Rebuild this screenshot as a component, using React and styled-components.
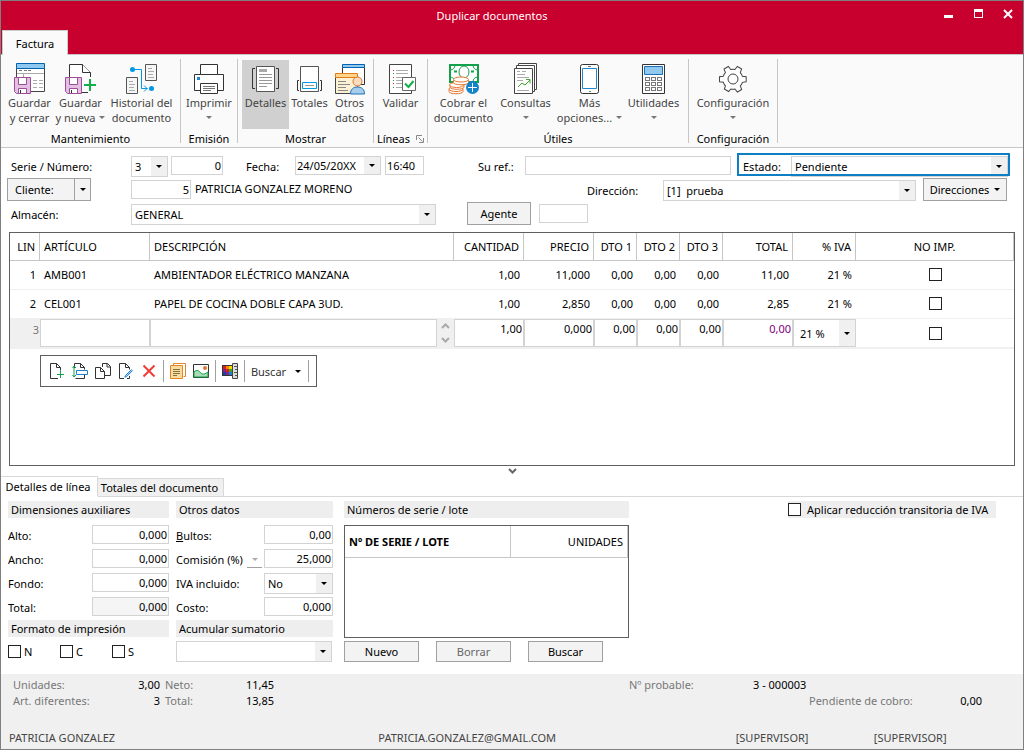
import React from 'react';
import styled, { createGlobalStyle, css } from 'styled-components';

const GlobalStyle = createGlobalStyle`
  * {
    box-sizing: border-box;
  }

  body {
    margin: 0;
    background: #fff;
  }

  body,
  button,
  input,
  select {
    font-family: 'Noto Sans', 'Open Sans', sans-serif;
    font-size: 11px;
    color: #000;
  }
`;

/* ---------- window ---------- */

const Window = styled.div`
  display: flex;
  flex-direction: column;
  min-height: 100vh;
  border: 1px solid #7f7f7f;
  background: #fff;
`;

const TitleBar = styled.header`
  display: flex;
  align-items: center;
  height: 29px;
  padding-left: 50px;
  background: #c8002d;
`;

const Title = styled.h1`
  flex: 1;
  margin: 0;
  font-size: 11px;
  font-weight: 400;
  text-align: center;
  color: #fff;
`;

const WindowButton = styled.button`
  display: flex;
  align-items: center;
  justify-content: center;
  width: 30px;
  height: 24px;
  margin-bottom: 4px;
  padding: 0;
  border: 0;
  background: transparent;
`;

const RibbonTabs = styled.nav`
  display: flex;
  height: 24px;
  padding-left: 1px;
  background: #c8002d;
`;

const RibbonTab = styled.button`
  position: relative;
  width: 66px;
  height: 25px;
  padding: 0;
  border: 1px solid #ccc;
  border-bottom: 0;
  background: #fafafa;
`;

/* ---------- ribbon ---------- */

const Ribbon = styled.div`
  display: flex;
  padding: 4px 0;
  border-top: 1px solid #c6c6c6;
  border-bottom: 1px solid #c6c6c6;
  background: #fafafa;
`;

const RibbonGroup = styled.section`
  display: flex;
  flex-direction: column;
  height: 84px;
  padding: 1px ${({ $pad = 0 }) => $pad}px 0;
  border-right: 1px solid #c6c6c6;
`;

const RibbonItems = styled.div`
  display: flex;
`;

const RibbonLabel = styled.div`
  display: flex;
  align-items: center;
  justify-content: center;
  gap: 6px;
  margin-top: 2px;
  line-height: 16px;
`;

const RibbonButton = styled.button`
  display: flex;
  flex-direction: column;
  align-items: center;
  width: ${({ $width }) => $width}px;
  height: 69px;
  padding: 3px 0 0;
  border: 0;
  background: ${({ $active }) => ($active ? '#d0d0d0' : 'transparent')};
  color: #444;
  line-height: 15px;
  white-space: nowrap;

  svg {
    flex: none;
  }
`;

const ButtonLine = styled.span`
  display: flex;
  align-items: center;
  justify-content: center;
  gap: 4px;
  height: 15px;
`;

const Caret = styled.i`
  flex: none;
  width: 0;
  height: 0;
  border: 3px solid transparent;
  border-top-color: ${({ $color = '#000' }) => $color};
  border-bottom: 0;
`;

/* ---------- fields ---------- */

const Label = styled.label`
  flex: none;
  width: ${({ $width }) => ($width ? `${$width}px` : 'auto')};
  padding-left: ${({ $pad = 0 }) => $pad}px;
  line-height: 22px;
  white-space: nowrap;
`;

const fieldBox = css`
  flex: ${({ $grow }) => ($grow ? '1 1 0' : 'none')};
  width: ${({ $width }) => ($width ? `${$width}px` : 'auto')};
  min-width: 0;
  margin-left: ${({ $gap = 0 }) => $gap}px;
  border: 1px solid #d3d3d3;
`;

const TextInput = styled.input`
  ${fieldBox}
  height: 19px;
  padding: 0 1px 1px;
  border-radius: 0;
  background: ${({ readOnly }) => (readOnly ? '#f5f5f5' : '#fff')};
  text-align: ${({ $right }) => ($right ? 'right' : 'left')};
`;

const ComboBox = styled.span`
  ${fieldBox}
  display: grid;
  grid-template-columns: 1fr 16px;
  height: ${({ $height = 21 }) => $height}px;
  background: #fff;

  select,
  input {
    grid-area: 1 / 1 / 2 / 3;
    width: 100%;
    min-width: 0;
    height: 100%;
    padding: 0 16px 0 ${({ $inset = 3 }) => $inset}px;
    border: 0;
    border-radius: 0;
    background: transparent;
    appearance: none;
  }
`;

const ComboArrow = styled.span`
  display: flex;
  grid-area: 1 / 2;
  align-items: center;
  justify-content: center;
  background: #f0f0f0;
  pointer-events: none;
`;

const Button = styled.button`
  display: flex;
  flex: none;
  align-items: center;
  justify-content: center;
  gap: 5px;
  width: ${({ $width }) => $width}px;
  height: ${({ $height = 23 }) => $height}px;
  padding: 0;
  border: 1px solid #a0a0a0;
  background: #f3f3f3;

  &:disabled {
    color: #666;
  }
`;

const CheckBox = styled.input.attrs({ type: 'checkbox' })`
  width: 13px;
  height: 13px;
  margin: 0;
  border: 1px solid #222;
  background: #fff;
  appearance: none;

  &:checked {
    background: #444;
  }
`;

/* ---------- document header ---------- */

const Form = styled.form`
  padding: 8px 13px 4px 6px;
`;

const FormRow = styled.div`
  display: flex;
  align-items: flex-start;
  height: 24px;

  ${Button} {
    margin-top: -2px;
  }
`;

const ClientCell = styled.div`
  display: flex;
  flex: none;
  width: 124px;
`;

const SplitMain = styled(Button)`
  justify-content: flex-start;
  padding-left: 7px;
  border-right: 0;
`;

const ClientName = styled.output`
  flex: none;
  width: 392px;
  margin-left: 4px;
  line-height: 18px;
`;

const AgentCell = styled.div`
  display: flex;
  gap: 8px;
  margin-left: 31px;
`;

const ButtonCell = styled.div`
  margin: 0 3px 0 7px;
`;

const StatusBox = styled.div`
  position: relative;
  display: flex;
  flex: none;
  width: 273px;
  height: 23px;
  margin: -3px 0 0 6px;
  padding: 3px 2px 0 6px;

  &::after {
    content: '';
    position: absolute;
    inset: 0;
    border: 2px solid #0f7fc5;
    pointer-events: none;
  }
`;

/* ---------- lines table ---------- */

const LinesPanel = styled.div`
  flex: 1;
  min-height: 234px;
  margin: 0 8px;
  border: 1px solid #5f5f5f;
`;

const LinesTable = styled.table`
  width: 100%;
  border-collapse: separate;
  border-spacing: 0;
  table-layout: fixed;

  th {
    height: 28px;
    padding: 0 4px 1px;
    border-right: 1px solid #c6c6c6;
    border-bottom: 1px solid #c6c6c6;
    font-weight: 400;
    white-space: nowrap;
  }

  td {
    height: 29px;
    padding: 0 4px 1px;
    border-bottom: 1px solid #f0f0f0;
    white-space: nowrap;
  }

  th,
  td {
    text-align: left;
  }
`;

const NumHead = styled.th`
  && {
    text-align: right;
  }
`;

const NumCell = styled.td`
  && {
    text-align: right;
  }
`;

const CheckHead = styled.th`
  && {
    text-align: center;
  }
`;

const CheckCell = styled.td`
  && {
    text-align: center;
  }

  ${CheckBox} {
    display: block;
    margin: 0 auto;
  }
`;

const EditRow = styled.tr`
  && td {
    height: 30px;
    padding: 0;
    border-bottom: 2px solid #f0f0f0;
  }
`;

const RowNumber = styled.td`
  background: #f0f0f0;
  color: #777;

  ${EditRow} && {
    padding: 0 1px 8px;
    text-align: right;
  }
`;

const CellInput = styled.input`
  display: block;
  width: 100%;
  min-width: 0;
  height: 28px;
  padding: 0 1px 9px;
  border: 1px solid #d3d3d3;
  border-radius: 0;
  color: ${({ $color = '#000' }) => $color};
  text-align: ${({ $right }) => ($right ? 'right' : 'left')};
`;

const DescriptionEdit = styled.div`
  display: flex;
  background: #f0f0f0;
`;

const Stepper = styled.div`
  display: flex;
  flex: none;
  flex-direction: column;
  align-items: center;
  justify-content: space-around;
  width: 17px;
`;

const StepButton = styled.button`
  display: flex;
  padding: 0;
  border: 0;
  background: transparent;
`;

const LinesToolbar = styled.div`
  display: inline-flex;
  align-items: center;
  height: 32px;
  margin: 6px 0 0 30px;
  padding: 0 5px 0 4px;
  border: 1px solid #5f5f5f;
  background: #fff;
`;

const ToolButton = styled.button`
  display: flex;
  align-items: center;
  justify-content: center;
  gap: 9px;
  width: ${({ $width = 23 }) => $width}px;
  height: 24px;
  padding: 0;
  border: 0;
  background: transparent;
  color: #333;
`;

const ToolDivider = styled.span`
  width: 1px;
  height: 22px;
  margin: 0 2px 0 3px;
  background: #a0a0a0;
`;

const Splitter = styled.button`
  display: flex;
  align-items: center;
  justify-content: center;
  height: 10px;
  padding: 0;
  border: 0;
  background: transparent;
`;

/* ---------- details ---------- */

const DetailTabs = styled.div`
  display: flex;
  align-items: flex-end;
  height: 21px;
  box-shadow: inset 0 -1px 0 #d8d8d8;
`;

const DetailTab = styled.button`
  width: ${({ $width }) => $width}px;
  height: ${({ $active }) => ($active ? 21 : 19)}px;
  padding: 0 2px 1px 0;
  border: 1px solid #d8d8d8;
  border-left: 0;
  border-bottom-color: ${({ $active }) => ($active ? '#fff' : '#d8d8d8')};
  background: ${({ $active }) => ($active ? '#fff' : '#f0f0f0')};
  white-space: nowrap;
`;

const Details = styled.div`
  display: flex;
  align-items: flex-start;
  padding: 4px 27px 12px 7px;
`;

const Column = styled.section`
  flex: none;
  width: ${({ $width }) => $width}px;
  margin-right: ${({ $gap }) => $gap}px;
`;

const SectionTitle = styled.h2`
  height: 17px;
  margin: 0;
  padding-left: 3px;
  background: #eee;
  font-size: 11px;
  font-weight: 400;
  line-height: 17px;
`;

const Fields = styled.div`
  display: grid;
  gap: 5px;
  margin: 7px 0 4px;
`;

const FieldRow = styled.div`
  display: flex;
  align-items: flex-start;
  justify-content: space-between;
  height: 19px;
`;

const CommissionMenu = styled.button`
  display: flex;
  align-items: center;
  justify-content: center;
  width: 15px;
  height: 19px;
  margin: 0 2px 0 auto;
  padding: 2px 0 0;
  border: 0;
  border-bottom: 1px solid #a0a0a0;
  background: transparent;
`;

const Formats = styled.div`
  display: flex;
  margin-top: 7px;
`;

const CheckLabel = styled.label`
  display: flex;
  align-items: center;
  gap: ${({ $gap = 3 }) => $gap}px;
  width: ${({ $width }) => ($width ? `${$width}px` : 'auto')};
  height: 15px;
`;

const SumRow = styled.div`
  display: flex;
  margin-top: 4px;
`;

const SerialBox = styled.div`
  height: 113px;
  margin-top: 7px;
  border: 1px solid #5f5f5f;
`;

const SerialTable = styled.table`
  width: 100%;
  border-spacing: 0;

  th {
    height: 32px;
    padding: 0 4px;
    border-right: 1px solid #c6c6c6;
    border-bottom: 1px solid #c6c6c6;
    text-align: left;
  }

  th + th {
    width: 117px;
    font-weight: 400;
    text-align: right;
  }
`;

const SerialButtons = styled.div`
  display: flex;
  gap: 17px;
  margin-top: 3px;
`;

const VatReduction = styled.div`
  display: flex;
  align-items: center;
  width: 208px;
  height: 17px;
  margin-left: auto;
  background: #eee;
  white-space: nowrap;
`;

/* ---------- footer ---------- */

const Footer = styled.footer`
  height: 75px;
  padding-top: 3px;
  background: #f0f0f0;
  line-height: 16px;
`;

const Summary = styled.div`
  display: flex;
  justify-content: space-between;
  padding: 0 41px 0 12px;
`;

const Totals = styled.dl`
  display: grid;
  grid-template-columns: 100px 47px 55px 59px;
  margin: 0;

  dt {
    color: #777;
  }

  dt:nth-of-type(even) {
    padding-left: 5px;
  }

  dd {
    margin: 0;
    text-align: right;
  }
`;

const Pending = styled.dl`
  width: 353px;
  margin: 0;

  div {
    display: flex;
  }

  div + div {
    justify-content: space-between;
    padding-left: 180px;
  }

  dt {
    color: #777;
  }

  dd {
    margin: 0;
  }

  div:first-child dt {
    width: 124px;
  }
`;

const StatusBar = styled.div`
  display: grid;
  grid-template-columns: 369fr 357fr 138fr 149fr;
  margin-top: 21px;
  padding-left: 8px;
  color: #444;
`;

/* ---------- icons ---------- */

const Icon = ({ size = 32, children }) => (
  <svg width={size} height={size} viewBox={`0 0 ${size} ${size}`} fill="none" aria-hidden="true">
    {children}
  </svg>
);

const Floppy = ({ y = 14 }) => (
  <g transform={`translate(0 ${y})`}>
    <path d="M.5 .5h16v16H2.5l-2-2z" fill="#e3bfe3" stroke="#9b4f96" />
    <path d="M4.5 .5h8v7h-8z" fill="#fff" stroke="#9b4f96" />
    <path d="M4.5 16.5v-5h8v5z" fill="#fff" stroke="#9b4f96" />
    <path d="M6.5 13v3" stroke="#333" />
  </g>
);

const SaveCloseIcon = () => (
  <Icon>
    <path d="M2.5 5.5h28v23h-28z" fill="#fff" stroke="#444" />
    <path d="M2.5 .5h28v5h-28z" fill="#91c8f0" stroke="#0063b1" />
    <path d="M5 7.5h3M10 7.5h3M14 7.5h3" stroke="#777" />
    <path d="M3 10.5h27M9.5 10v4" stroke="#aaa" />
    <path d="M19 17.5h4M25 17.5h4M19 20.5h4M25 20.5h4M19 24.5h4M25 24.5h4" stroke="#aaa" />
    <Floppy />
  </Icon>
);

const SaveNewIcon = () => (
  <Icon>
    <path d="M4.5 29.5V1.5h13l8 8v20z" fill="#fff" stroke="#333" />
    <path d="M17.5 1.5v8h8" fill="#fff" stroke="#333" />
    <path d="M25 14v18M18 22h12" stroke="#fafafa" strokeWidth="4" />
    <Floppy />
    <path d="M25 16v12M19 22h12" stroke="#12b04b" strokeWidth="2" />
  </Icon>
);

const HistoryIcon = () => (
  <Icon>
    <path d="M19.5 1.5h11v16h-11zM.5 14.5h11v16H.5z" fill="#f6f6f6" stroke="#555" />
    <path d="M22 5.5h4M22 8.5h6M22 11.5h5M22 14.5h6M3 18.5h4M3 21.5h6M3 24.5h5M3 27.5h6" stroke="#aaa" />
    <path d="M6 6.5h9.5v19h6M18 22.5l3 3-3 3" stroke="#0099e5" />
    <circle cx="6.5" cy="6.5" r="2.5" fill="#0099e5" />
    <circle cx="25.5" cy="25.5" r="2.5" fill="#0099e5" />
  </Icon>
);

const PrintIcon = () => (
  <Icon>
    <path d="M1.5 11.5h29v16h-29z" fill="#fff" stroke="#333" />
    <path d="M7.5 1.5h17v10h-17zM7.5 20.5h17v10h-17z" fill="#fff" stroke="#333" />
    <path d="M10 23.5h12M10 25.5h12M10 27.5h8" stroke="#777" />
    <path d="M4 14h3v3H4z" fill="#1e88d2" />
  </Icon>
);

const DetailsIcon = () => (
  <Icon>
    <path d="M6.5 3.5h18v25h-18z" fill="#fff" stroke="#555" />
    <path d="M9 6h8v3H9z" fill="#aaa" />
    <path d="M9 11.5h13M9 14.5h13M9 17.5h13M9 20.5h13M9 23.5h8" stroke="#999" />
    <path d="M5 5.5H2.500v20H5M26 5.500h2.500v20H26" stroke="#333" />
  </Icon>
);

const TotalsIcon = () => (
  <Icon>
    <path d="M6.5 3.5h18v25h-18z" fill="#fff" stroke="#555" />
    <path d="M8.5 19.5h14v6h-14z" fill="#fff" stroke="#0099e5" />
    <path d="M11 22.5h9" stroke="#999" />
    <path d="M5 17.5H3.5v10H5M26 17.5h1.500v10H26" stroke="#333" />
  </Icon>
);

const OtherDataIcon = () => (
  <Icon>
    <path d="M8.500 4.500h22v17h-22z" fill="#fff" stroke="#333" />
    <path d="M8.500 1.500h22v3h-22z" fill="#91c8f0" stroke="#0063b1" />
    <path d="M1.500 14.500h22v16h-22z" fill="#fbf0d4" stroke="#444" />
    <path d="M1.500 10.500h22v4h-22z" fill="#ffd58a" stroke="#e07b1a" />
    <path d="M4 18.500h8M4 21.500h12M4 24.500h8M4 27.500h10" stroke="#888" />
    <path d="M16.500 31c0-5 3-7 7-7s7 2 7 7z" fill="#a6cdec" stroke="#1e6fb5" />
    <circle cx="23.500" cy="18.500" r="4.500" fill="#fadcc0" stroke="#d6752a" />
  </Icon>
);

const ValidateIcon = () => (
  <Icon>
    <path d="M4.500 1.500h22v29h-22z" fill="#fff" stroke="#444" />
    <path d="M11 7.500h12M11 10.500h12M11 14.500h12M11 17.500h6M11 20.500h6M11 24.500h6" stroke="#aaa" />
    <path d="M8 7.500h1M8 14.500h1M8 20.500h1" stroke="#d22" />
    <path d="M8 10.500h1M8 17.500h1M8 24.500h1" stroke="#12a04b" />
    <path d="M17.500 14.500h13v13h-13z" fill="#fff" stroke="#666" />
    <path d="M20 20.500l3.500 3.500 5-6" stroke="#12b04b" strokeWidth="2" />
  </Icon>
);

const CashIcon = () => (
  <Icon>
    <path d="M2 2h28v17H2z" fill="#fff" stroke="#12a04b" strokeWidth="2" />
    <path d="M2 7c3 0 5-2 5-5M30 7c-3 0-5-2-5-5M25 19c0-3 2-5 5-5M2 14c2 0 3 1 4 2" stroke="#12a04b" />
    <ellipse cx="16" cy="9" rx="5" ry="6" stroke="#12a04b" />
    <path d="M6 8.500h3M23 8.500h3" stroke="#12a04b" strokeWidth="2" />
    <g fill="#fff" stroke="#e8762d">
      <path d="M1 26.500v2c0 3 14 3 14 0v-2z" />
      <ellipse cx="8" cy="26" rx="7" ry="2.500" />
      <path d="M2 22v2c0 3 14 3 14 0v-2z" />
      <ellipse cx="8.500" cy="22" rx="7" ry="2.500" />
      <path d="M5.500 17.500v2c0 3 15 3 15 0v-2z" />
      <ellipse cx="13" cy="16.500" rx="7.500" ry="2.500" />
    </g>
    <circle cx="24.500" cy="24.500" r="6.500" fill="#1583c9" />
    <path d="M24.500 20v9M20 24.500h9" stroke="#fff" />
  </Icon>
);

const QueriesIcon = () => (
  <Icon>
    <path d="M8.500 .5h18v26h-18z" fill="#fff" stroke="#444" />
    <path d="M6.500 2.500h18v26h-18z" fill="#fff" stroke="#444" />
    <path d="M4.500 5.500h18v25h-18z" fill="#fff" stroke="#444" />
    <path d="M7 8.500h3M12 8.500h4M7 11.500h8M7 14.500h12M7 17.500h6M7 27.500h12" stroke="#aaa" />
    <path d="M8 24l4-4 3 2 5-5M16 16.500h4v4" stroke="#3aa528" />
  </Icon>
);

const PhoneIcon = () => (
  <Icon>
    <rect x="6.500" y="1.500" width="18" height="29" rx="2" fill="#fff" stroke="#333" />
    <path d="M8.500 5.500h14v20h-14z" stroke="#1e88d2" />
    <path d="M14 3.500h3M15 28.500h2" stroke="#777" />
  </Icon>
);

const CalculatorIcon = () => (
  <Icon>
    <path d="M4.500 1.500h22v29h-22z" fill="#fff" stroke="#333" />
    <path d="M6.500 3.500h18v8h-18z" fill="#91c8f0" stroke="#1e6fb5" />
    {[14, 19, 24].map((y) =>
      [7, 13, 19].map((x) => (
        <rect key={`${x}-${y}`} x={x + 0.5} y={y + 0.5} width="4" height="3" stroke="#777" />
      ))
    )}
  </Icon>
);

const GearIcon = () => (
  <Icon>
    <path
      transform="rotate(30 16 16)"
      d="M13.500 3h5l.6 3.800a9.800 9.800 0 0 1 3.600 2.100l3.600-1.400 2.500 4.300-3 2.400a9.800 9.800 0 0 1 0 4.200l3 2.400-2.500 4.300-3.600-1.400a9.800 9.800 0 0 1-3.600 2.100l-.6 3.200h-5l-.6-3.200a9.800 9.800 0 0 1-3.600-2.100l-3.600 1.400-2.500-4.300 3-2.400a9.800 9.800 0 0 1 0-4.200l-3-2.400 2.500-4.300 3.600 1.400a9.800 9.800 0 0 1 3.600-2.100z"
      fill="#fff"
      stroke="#444"
    />
    <circle cx="16" cy="16" r="5" stroke="#444" />
  </Icon>
);

const LauncherIcon = () => (
  <Icon size={8}>
    <path d="M.5 5V.5H6M2.500 2.500l4 4M7.500 3v4.500H3" stroke="#888" />
  </Icon>
);

const NewLineIcon = () => (
  <Icon size={16}>
    <path d="M9 15.500H1.500V.5h6l4 4v3M7.500 .5v4h4" stroke="#333" />
    <path d="M11.500 8v7M8 11.500h7" stroke="#12a04b" />
  </Icon>
);

const InsertLineIcon = () => (
  <Icon size={16}>
    <path d="M2.500 5V.500h6l4 4v2M8.500 .5v4h4M3.500 15.500h9V12" stroke="#333" />
    <path d="M4.500 7.500h11v4h-11z" fill="#fff" stroke="#1e7fd0" />
    <path d="M2 3v11M.5 5L2 3l2 2M.5 12L2 14l2-2" stroke="#12a04b" />
  </Icon>
);

const CopyLineIcon = () => (
  <Icon size={16}>
    <path d="M7.500 4V.500h5l3 3v9H10" stroke="#333" />
    <path d="M.5 4.500h5l4 4v7h-9zM5.500 4.500v4h4M12 .5v3.500h3.500" stroke="#333" />
  </Icon>
);

const EditLineIcon = () => (
  <Icon size={16}>
    <path d="M6 15.500H1.500V.5h6l4 4v2M7.500 .5v4h4M9 15.500h2.500V13" stroke="#333" />
    <path d="M13.500 6.500l-6 6-.7 1.700 1.800-.6 6-6" fill="#a6cdec" stroke="#1e7fd0" />
  </Icon>
);

const DeleteIcon = () => (
  <Icon size={16}>
    <path d="M2.500 2.500l11 11M13.500 2.500l-11 11" stroke="#ee3e38" strokeWidth="2" />
  </Icon>
);

const NotesIcon = () => (
  <Icon size={16}>
    <path d="M3.500 2.500v-2h12v13h-2" fill="#fff" stroke="#e0862d" />
    <path d="M.5 2.500h12v13H.5z" fill="#f8dc9c" stroke="#e0862d" />
    <path d="M3 6.500h7M3 8.500h7M3 10.500h7M3 12.500h4" stroke="#877147" />
  </Icon>
);

const ImageIcon = () => (
  <Icon size={16}>
    <path d="M.5 1.500h15v13H.5z" fill="#fff" stroke="#333" />
    <path d="M1 9c3-3 5-1 7 1s4 1 7-1v5H1z" fill="#a9dcb5" stroke="#12a04b" />
    <circle cx="12" cy="5" r="2" fill="#e8762d" />
  </Icon>
);

const swatches = ['#d8201f', '#f08a00', '#f7d800', '#8e1f8f', '#d8201f', '#3aa528', '#1b3fa8', '#8e1f8f', '#1583c9'];

const PaletteIcon = () => (
  <Icon size={16}>
    <path d="M0 2h12v11H0z" fill="#333" />
    {swatches.map((fill, i) => (
      <rect key={i} x={1 + (i % 3) * 3} y={3 + Math.floor(i / 3) * 3} width="3" height="3" fill={fill} />
    ))}
    <path d="M10.500 .5h5v15h-5z" fill="#ddd" stroke="#444" />
    <path d="M12 3.500h3M13 6.500h2M12 9.500h3M13 12.500h2" stroke="#555" />
  </Icon>
);

const Chevron = ({ up, color = '#aaa' }) => (
  <svg width="9" height="6" viewBox="0 0 9 6" fill="none" aria-hidden="true">
    <path d={up ? 'M1 5l3.500-3.500L8 5' : 'M1 1l3.500 3.500L8 1'} stroke={color} strokeWidth="2" />
  </svg>
);

/* ---------- data ---------- */

const ribbonGroups = [
  {
    name: 'Mantenimiento',
    pad: 3,
    items: [
      { icon: SaveCloseIcon, lines: ['Guardar', 'y cerrar'], width: 51 },
      { icon: SaveNewIcon, lines: ['Guardar', 'y nueva'], menu: true, width: 51 },
      { icon: HistoryIcon, lines: ['Historial del', 'documento'], width: 71 },
    ],
  },
  { name: 'Emisión', items: [{ icon: PrintIcon, lines: ['Imprimir', ''], menu: true, width: 56 }] },
  {
    name: 'Mostrar',
    pad: 4,
    items: [
      { icon: DetailsIcon, lines: ['Detalles'], width: 47, active: true },
      { icon: TotalsIcon, lines: ['Totales'], width: 41 },
      { icon: OtherDataIcon, lines: ['Otros', 'datos'], width: 39 },
    ],
  },
  { name: 'Líneas', launcher: true, items: [{ icon: ValidateIcon, lines: ['Validar'], width: 53 }] },
  {
    name: 'Útiles',
    pad: 4,
    items: [
      { icon: CashIcon, lines: ['Cobrar el', 'documento'], width: 63 },
      { icon: QueriesIcon, lines: ['Consultas', ''], menu: true, width: 61 },
      { icon: PhoneIcon, lines: ['Más', 'opciones...'], menu: true, width: 67 },
      { icon: CalculatorIcon, lines: ['Utilidades', ''], menu: true, width: 61 },
    ],
  },
  { name: 'Configuración', items: [{ icon: GearIcon, lines: ['Configuración', ''], menu: true, width: 88 }] },
];

const columnWidths = [30, 110, null, 70, 70, 43, 43, 43, 70, 63, 158];

const numericHeads = ['CANTIDAD', 'PRECIO', 'DTO 1', 'DTO 2', 'DTO 3', 'TOTAL', '% IVA'];

const lines = [
  {
    article: 'AMB001',
    description: 'AMBIENTADOR ELÉCTRICO MANZANA',
    values: ['1,00', '11,000', '0,00', '0,00', '0,00', '11,00', '21 %'],
  },
  {
    article: 'CEL001',
    description: 'PAPEL DE COCINA DOBLE CAPA 3UD.',
    values: ['1,00', '2,850', '0,00', '0,00', '0,00', '2,85', '21 %'],
  },
];

const editValues = [
  ['Cantidad', '1,00'],
  ['Precio', '0,000'],
  ['Dto 1', '0,00'],
  ['Dto 2', '0,00'],
  ['Dto 3', '0,00'],
  ['Total', '0,00'],
];

const lineTools = [
  [
    ['Nueva línea', NewLineIcon],
    ['Insertar línea', InsertLineIcon],
    ['Duplicar línea', CopyLineIcon],
    ['Editar línea', EditLineIcon],
    ['Eliminar línea', DeleteIcon],
  ],
  [
    ['Notas', NotesIcon],
    ['Imagen', ImageIcon],
  ],
  [['Tallas y colores', PaletteIcon]],
];

const dimensions = [
  ['Alto:', 'alto'],
  ['Ancho:', 'ancho'],
  ['Fondo:', 'fondo'],
  ['Total:', 'total'],
];

/* ---------- parts ---------- */

function Combo({ id, label, options, ...box }) {
  return (
    <ComboBox {...box}>
      <select id={id} aria-label={label}>
        {options.map((option) => (
          <option key={option}>{option}</option>
        ))}
      </select>
      <ComboArrow>
        <Caret />
      </ComboArrow>
    </ComboBox>
  );
}

function RibbonBar() {
  return (
    <Ribbon>
      {ribbonGroups.map(({ name, pad, items, launcher }) => (
        <RibbonGroup key={name} $pad={pad} aria-label={name}>
          <RibbonItems>
            {items.map(({ icon: Glyph, lines: text, menu, width, active }) => (
              <RibbonButton key={text.join(' ')} type="button" $width={width} $active={active}>
                <Glyph />
                {text.map((line, i) => (
                  <ButtonLine key={i}>
                    {line}
                    {menu && i === text.length - 1 && <Caret $color="#777" />}
                  </ButtonLine>
                ))}
              </RibbonButton>
            ))}
          </RibbonItems>
          <RibbonLabel>
            {name}
            {launcher && <LauncherIcon />}
          </RibbonLabel>
        </RibbonGroup>
      ))}
    </Ribbon>
  );
}

function DocumentForm() {
  return (
    <Form>
      <FormRow>
        <Label htmlFor="serie" $width={124} $pad={4}>
          Serie / Número:
        </Label>
        <Combo id="serie" options={['3']} $width={37} />
        <TextInput aria-label="Número" defaultValue="0" $width={52} $gap={3} $right />
        <Label htmlFor="fecha" $width={72} $pad={23}>
          Fecha:
        </Label>
        <ComboBox $width={86} $height={19} $inset={1}>
          <input id="fecha" defaultValue="24/05/20XX" />
          <ComboArrow>
            <Caret />
          </ComboArrow>
        </ComboBox>
        <TextInput aria-label="Hora" defaultValue="16:40" $width={39} $gap={4} />
        <Label htmlFor="ref" $width={101} $pad={54}>
          Su ref.:
        </Label>
        <TextInput id="ref" $grow />
        <StatusBox>
          <Label htmlFor="estado" $width={48}>
            Estado:
          </Label>
          <Combo id="estado" options={['Pendiente']} $grow />
        </StatusBox>
      </FormRow>
      <FormRow>
        <ClientCell>
          <SplitMain type="button" $width={67}>
            Cliente:
          </SplitMain>
          <Button type="button" aria-label="Opciones de cliente" $width={17}>
            <Caret />
          </Button>
        </ClientCell>
        <TextInput aria-label="Código de cliente" defaultValue="5" $width={60} $right />
        <ClientName>PATRICIA GONZALEZ MORENO</ClientName>
        <Label htmlFor="direccion" $width={76}>
          Dirección:
        </Label>
        <Combo id="direccion" options={['[1]\u00a0 prueba']} $grow />
        <ButtonCell>
          <Button type="button" $width={84}>
            Direcciones <Caret />
          </Button>
        </ButtonCell>
      </FormRow>
      <FormRow>
        <Label htmlFor="almacen" $width={124} $pad={4}>
          Almacén:
        </Label>
        <Combo id="almacen" options={['GENERAL']} $width={305} />
        <AgentCell>
          <Button type="button" $width={64}>
            Agente
          </Button>
          <TextInput aria-label="Agente" $width={49} />
        </AgentCell>
      </FormRow>
    </Form>
  );
}

function DocumentLines() {
  return (
    <LinesPanel>
      <LinesTable>
        <colgroup>
          {columnWidths.map((width, i) => (
            <col key={i} width={width ?? undefined} />
          ))}
        </colgroup>
        <thead>
          <tr>
            <NumHead>LIN</NumHead>
            <th>ARTÍCULO</th>
            <th>DESCRIPCIÓN</th>
            {numericHeads.map((head) => (
              <NumHead key={head}>{head}</NumHead>
            ))}
            <CheckHead>NO IMP.</CheckHead>
          </tr>
        </thead>
        <tbody>
          {lines.map(({ article, description, values }, index) => (
            <tr key={article}>
              <NumCell>{index + 1}</NumCell>
              <td>{article}</td>
              <td>{description}</td>
              {values.map((value, i) => (
                <NumCell key={i}>{value}</NumCell>
              ))}
              <CheckCell>
                <CheckBox aria-label={`No imprimir línea ${index + 1}`} />
              </CheckCell>
            </tr>
          ))}
          <EditRow>
            <RowNumber>3</RowNumber>
            <td>
              <CellInput aria-label="Artículo" />
            </td>
            <td>
              <DescriptionEdit>
                <CellInput aria-label="Descripción" />
                <Stepper>
                  <StepButton type="button" aria-label="Subir">
                    <Chevron up />
                  </StepButton>
                  <StepButton type="button" aria-label="Bajar">
                    <Chevron />
                  </StepButton>
                </Stepper>
              </DescriptionEdit>
            </td>
            {editValues.map(([label, value]) => (
              <td key={label}>
                <CellInput
                  aria-label={label}
                  defaultValue={value}
                  $right
                  $color={label === 'Total' ? '#800080' : undefined}
                />
              </td>
            ))}
            <td>
              <Combo label="% IVA" options={['21 %']} $height={28} $inset={6} />
            </td>
            <CheckCell>
              <CheckBox aria-label="No imprimir línea 3" />
            </CheckCell>
          </EditRow>
        </tbody>
      </LinesTable>
      <LinesToolbar role="toolbar">
        {lineTools.map((group, i) => (
          <React.Fragment key={i}>
            {group.map(([label, Glyph]) => (
              <ToolButton key={label} type="button" aria-label={label}>
                <Glyph />
              </ToolButton>
            ))}
            <ToolDivider />
          </React.Fragment>
        ))}
        <ToolButton type="button" $width={58}>
          Buscar <Caret />
        </ToolButton>
        <ToolDivider />
      </LinesToolbar>
    </LinesPanel>
  );
}

function LineDetails() {
  return (
    <Details>
      <Column $width={161} $gap={7}>
        <SectionTitle>Dimensiones auxiliares</SectionTitle>
        <Fields>
          {dimensions.map(([label, id]) => (
            <FieldRow key={id}>
              <Label htmlFor={id}>{label}</Label>
              <TextInput id={id} defaultValue="0,000" readOnly={id === 'total'} $width={77} $right />
            </FieldRow>
          ))}
        </Fields>
        <SectionTitle>Formato de impresión</SectionTitle>
        <Formats>
          {['N', 'C', 'S'].map((format) => (
            <CheckLabel key={format} $width={52}>
              <CheckBox />
              {format}
            </CheckLabel>
          ))}
        </Formats>
      </Column>
      <Column $width={157} $gap={11}>
        <SectionTitle>Otros datos</SectionTitle>
        <Fields>
          <FieldRow>
            <Label htmlFor="bultos">
              <u>B</u>ultos:
            </Label>
            <TextInput id="bultos" defaultValue="0,00" $width={69} $right />
          </FieldRow>
          <FieldRow>
            <Label htmlFor="comision">Comisión (%)</Label>
            <CommissionMenu type="button" aria-label="Tipo de comisión">
              <Caret $color="#aaa" />
            </CommissionMenu>
            <TextInput id="comision" defaultValue="25,000" $width={69} $right />
          </FieldRow>
          <FieldRow>
            <Label htmlFor="iva">IVA incluido:</Label>
            <Combo id="iva" options={['No', 'Sí']} $width={69} />
          </FieldRow>
          <FieldRow>
            <Label htmlFor="costo">Costo:</Label>
            <TextInput id="costo" defaultValue="0,000" $width={69} $right />
          </FieldRow>
        </Fields>
        <SectionTitle>Acumular sumatorio</SectionTitle>
        <SumRow>
          <Combo label="Acumular sumatorio" options={['']} $width={156} />
        </SumRow>
      </Column>
      <Column $width={285} $gap={20}>
        <SectionTitle>Números de serie / lote</SectionTitle>
        <SerialBox>
          <SerialTable>
            <thead>
              <tr>
                <th>Nº DE SERIE / LOTE</th>
                <th>UNIDADES</th>
              </tr>
            </thead>
          </SerialTable>
        </SerialBox>
        <SerialButtons>
          <Button type="button" $width={75} $height={21}>
            Nuevo
          </Button>
          <Button type="button" $width={75} $height={21} disabled>
            Borrar
          </Button>
          <Button type="button" $width={75} $height={21}>
            Buscar
          </Button>
        </SerialButtons>
      </Column>
      <VatReduction>
        <CheckLabel $gap={6}>
          <CheckBox />
          Aplicar reducción transitoria de IVA
        </CheckLabel>
      </VatReduction>
    </Details>
  );
}

function DocumentFooter() {
  return (
    <Footer>
      <Summary>
        <Totals>
          <dt>Unidades:</dt>
          <dd>3,00</dd>
          <dt>Neto:</dt>
          <dd>11,45</dd>
          <dt>Art. diferentes:</dt>
          <dd>3</dd>
          <dt>Total:</dt>
          <dd>13,85</dd>
        </Totals>
        <Pending>
          <div>
            <dt>Nº probable:</dt>
            <dd>3 - 000003</dd>
          </div>
          <div>
            <dt>Pendiente de cobro:</dt>
            <dd>0,00</dd>
          </div>
        </Pending>
      </Summary>
      <StatusBar>
        <span>PATRICIA GONZALEZ</span>
        <span>PATRICIA.GONZALEZ@GMAIL.COM</span>
        <span>[SUPERVISOR]</span>
        <span>[SUPERVISOR]</span>
      </StatusBar>
    </Footer>
  );
}

export default function App() {
  return (
    <>
      <GlobalStyle />
      <Window>
        <TitleBar>
          <Title>Duplicar documentos</Title>
          <WindowButton type="button" aria-label="Minimizar">
            <svg width="9" height="9">
              <path d="M0 6h9v3H0z" fill="#fff" />
            </svg>
          </WindowButton>
          <WindowButton type="button" aria-label="Maximizar">
            <svg width="9" height="9">
              <path d="M0 0h9v9H0zM1 3v5h7V3z" fill="#fff" fillRule="evenodd" />
            </svg>
          </WindowButton>
          <WindowButton type="button" aria-label="Cerrar">
            <svg width="10" height="10">
              <path d="M1 1l8 8M9 1L1 9" stroke="#fff" strokeWidth="2" />
            </svg>
          </WindowButton>
        </TitleBar>
        <RibbonTabs>
          <RibbonTab type="button">Factura</RibbonTab>
        </RibbonTabs>
        <RibbonBar />
        <DocumentForm />
        <DocumentLines />
        <Splitter type="button" aria-label="Contraer panel">
          <Chevron color="#666" />
        </Splitter>
        <DetailTabs role="tablist">
          <DetailTab type="button" role="tab" aria-selected $width={97} $active>
            Detalles de línea
          </DetailTab>
          <DetailTab type="button" role="tab" aria-selected={false} $width={126}>
            Totales del documento
          </DetailTab>
        </DetailTabs>
        <LineDetails />
        <DocumentFooter />
      </Window>
    </>
  );
}
